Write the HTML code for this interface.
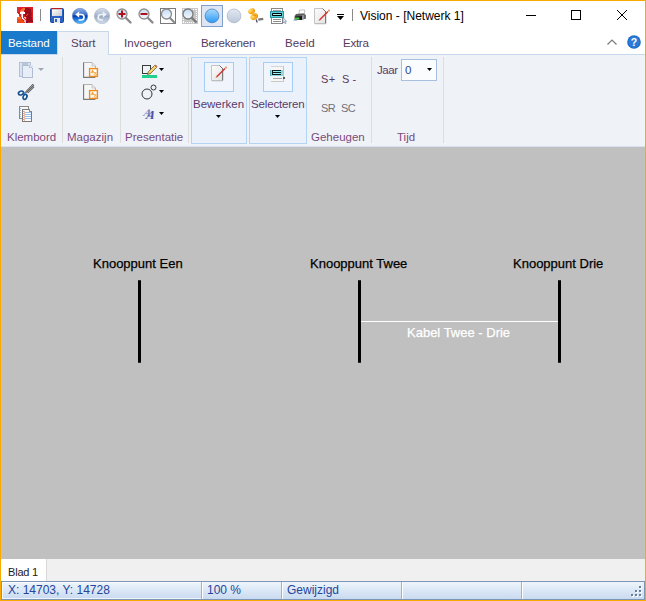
<!DOCTYPE html>
<html><head><meta charset="utf-8">
<style>
*{margin:0;padding:0;box-sizing:border-box}
html,body{width:646px;height:601px;overflow:hidden;background:#fff;font-family:"Liberation Sans",sans-serif;font-size:12px;color:#000;position:relative}
.a{position:absolute}
.t{position:absolute;white-space:nowrap;line-height:1}
.lbl{color:#7a4a7c;font-size:11.5px}
svg{position:absolute;overflow:visible}
</style></head><body>
<!-- title bar -->
<div class="a" style="left:0;top:0;width:646px;height:31px;background:#fff"></div>
<!-- app icon -->
<svg style="left:17px;top:7px" width="16" height="16" viewBox="0 0 16 16" shape-rendering="crispEdges">
<rect x="0" y="0" width="8" height="1" fill="#e0283c"/>
<rect x="8" y="0" width="8" height="1" fill="#dc1e1e"/>
<rect x="0" y="1" width="3" height="1" fill="#e0283c"/>
<rect x="3" y="1" width="2" height="1" fill="#dc1e1e"/>
<rect x="5" y="1" width="1" height="1" fill="#f04a1a"/>
<rect x="6" y="1" width="2" height="1" fill="#f87030"/>
<rect x="8" y="1" width="4" height="1" fill="#980c1c"/>
<rect x="12" y="1" width="1" height="1" fill="#b81420"/>
<rect x="13" y="1" width="3" height="1" fill="#dc1e1e"/>
<rect x="0" y="2" width="3" height="1" fill="#e0283c"/>
<rect x="3" y="2" width="1" height="1" fill="#dc1e1e"/>
<rect x="4" y="2" width="4" height="1" fill="#f87030"/>
<rect x="8" y="2" width="6" height="1" fill="#980c1c"/>
<rect x="14" y="2" width="2" height="1" fill="#dc1e1e"/>
<rect x="0" y="3" width="3" height="1" fill="#e0283c"/>
<rect x="3" y="3" width="1" height="1" fill="#f04a1a"/>
<rect x="4" y="3" width="3" height="1" fill="#f87030"/>
<rect x="7" y="3" width="1" height="1" fill="#b81420"/>
<rect x="8" y="3" width="6" height="1" fill="#980c1c"/>
<rect x="14" y="3" width="2" height="1" fill="#dc1e1e"/>
<rect x="0" y="4" width="2" height="1" fill="#e0283c"/>
<rect x="2" y="4" width="1" height="1" fill="#dc1e1e"/>
<rect x="3" y="4" width="1" height="1" fill="#f87030"/>
<rect x="4" y="4" width="3" height="1" fill="#ffb8a8"/>
<rect x="7" y="4" width="1" height="1" fill="#b81420"/>
<rect x="8" y="4" width="6" height="1" fill="#980c1c"/>
<rect x="14" y="4" width="2" height="1" fill="#dc1e1e"/>
<rect x="0" y="5" width="1" height="1" fill="#e0283c"/>
<rect x="1" y="5" width="2" height="1" fill="#dc1e1e"/>
<rect x="3" y="5" width="5" height="1" fill="#ffffff"/>
<rect x="8" y="5" width="6" height="1" fill="#980c1c"/>
<rect x="14" y="5" width="1" height="1" fill="#b81420"/>
<rect x="15" y="5" width="1" height="1" fill="#dc1e1e"/>
<rect x="0" y="6" width="1" height="1" fill="#ffffff"/>
<rect x="1" y="6" width="2" height="1" fill="#dc1e1e"/>
<rect x="3" y="6" width="5" height="1" fill="#ffffff"/>
<rect x="8" y="6" width="1" height="1" fill="#b81420"/>
<rect x="9" y="6" width="5" height="1" fill="#980c1c"/>
<rect x="14" y="6" width="1" height="1" fill="#b81420"/>
<rect x="15" y="6" width="1" height="1" fill="#dc1e1e"/>
<rect x="0" y="7" width="2" height="1" fill="#ffffff"/>
<rect x="2" y="7" width="1" height="1" fill="#dc1e1e"/>
<rect x="3" y="7" width="1" height="1" fill="#c02050"/>
<rect x="4" y="7" width="1" height="1" fill="#ffb8a8"/>
<rect x="5" y="7" width="1" height="1" fill="#ffffff"/>
<rect x="6" y="7" width="1" height="1" fill="#dc1e1e"/>
<rect x="7" y="7" width="1" height="1" fill="#b81420"/>
<rect x="8" y="7" width="2" height="1" fill="#980c1c"/>
<rect x="10" y="7" width="1" height="1" fill="#f04a1a"/>
<rect x="11" y="7" width="1" height="1" fill="#b81420"/>
<rect x="12" y="7" width="2" height="1" fill="#980c1c"/>
<rect x="14" y="7" width="1" height="1" fill="#b81420"/>
<rect x="15" y="7" width="1" height="1" fill="#dc1e1e"/>
<rect x="0" y="8" width="2" height="1" fill="#ffffff"/>
<rect x="2" y="8" width="2" height="1" fill="#dc1e1e"/>
<rect x="4" y="8" width="1" height="1" fill="#ffb8a8"/>
<rect x="5" y="8" width="1" height="1" fill="#ffffff"/>
<rect x="6" y="8" width="1" height="1" fill="#dc1e1e"/>
<rect x="7" y="8" width="1" height="1" fill="#b81420"/>
<rect x="8" y="8" width="1" height="1" fill="#980c1c"/>
<rect x="9" y="8" width="1" height="1" fill="#f04a1a"/>
<rect x="10" y="8" width="4" height="1" fill="#980c1c"/>
<rect x="14" y="8" width="1" height="1" fill="#b81420"/>
<rect x="15" y="8" width="1" height="1" fill="#dc1e1e"/>
<rect x="0" y="9" width="2" height="1" fill="#ffffff"/>
<rect x="2" y="9" width="1" height="1" fill="#f87030"/>
<rect x="3" y="9" width="1" height="1" fill="#dc1e1e"/>
<rect x="4" y="9" width="1" height="1" fill="#ffb8a8"/>
<rect x="5" y="9" width="1" height="1" fill="#ffffff"/>
<rect x="6" y="9" width="2" height="1" fill="#dc1e1e"/>
<rect x="8" y="9" width="1" height="1" fill="#b81420"/>
<rect x="9" y="9" width="5" height="1" fill="#980c1c"/>
<rect x="14" y="9" width="2" height="1" fill="#dc1e1e"/>
<rect x="0" y="10" width="4" height="1" fill="#f87030"/>
<rect x="4" y="10" width="1" height="1" fill="#f04a1a"/>
<rect x="5" y="10" width="1" height="1" fill="#ffffff"/>
<rect x="6" y="10" width="1" height="1" fill="#dc1e1e"/>
<rect x="7" y="10" width="2" height="1" fill="#ffb8a8"/>
<rect x="9" y="10" width="1" height="1" fill="#b81420"/>
<rect x="10" y="10" width="5" height="1" fill="#980c1c"/>
<rect x="15" y="10" width="1" height="1" fill="#dc1e1e"/>
<rect x="0" y="11" width="4" height="1" fill="#f87030"/>
<rect x="4" y="11" width="1" height="1" fill="#f04a1a"/>
<rect x="5" y="11" width="1" height="1" fill="#ffffff"/>
<rect x="6" y="11" width="1" height="1" fill="#ffb8a8"/>
<rect x="7" y="11" width="1" height="1" fill="#dc1e1e"/>
<rect x="8" y="11" width="1" height="1" fill="#ffb8a8"/>
<rect x="9" y="11" width="1" height="1" fill="#b81420"/>
<rect x="10" y="11" width="5" height="1" fill="#980c1c"/>
<rect x="15" y="11" width="1" height="1" fill="#dc1e1e"/>
<rect x="0" y="12" width="5" height="1" fill="#f04a1a"/>
<rect x="5" y="12" width="1" height="1" fill="#dc1e1e"/>
<rect x="6" y="12" width="1" height="1" fill="#ffffff"/>
<rect x="7" y="12" width="1" height="1" fill="#ffb8a8"/>
<rect x="8" y="12" width="1" height="1" fill="#dc1e1e"/>
<rect x="9" y="12" width="1" height="1" fill="#b81420"/>
<rect x="10" y="12" width="5" height="1" fill="#980c1c"/>
<rect x="15" y="12" width="1" height="1" fill="#dc1e1e"/>
<rect x="0" y="13" width="6" height="1" fill="#f04a1a"/>
<rect x="6" y="13" width="1" height="1" fill="#dc1e1e"/>
<rect x="7" y="13" width="2" height="1" fill="#ffb8a8"/>
<rect x="9" y="13" width="1" height="1" fill="#b81420"/>
<rect x="10" y="13" width="6" height="1" fill="#980c1c"/>
<rect x="0" y="14" width="7" height="1" fill="#f04a1a"/>
<rect x="7" y="14" width="2" height="1" fill="#ffb8a8"/>
<rect x="9" y="14" width="1" height="1" fill="#7a0a40"/>
<rect x="10" y="14" width="6" height="1" fill="#980c1c"/>
<rect x="0" y="15" width="8" height="1" fill="#f04a1a"/>
<rect x="8" y="15" width="1" height="1" fill="#ffb8a8"/>
<rect x="9" y="15" width="2" height="1" fill="#7a0a40"/>
<rect x="11" y="15" width="5" height="1" fill="#dc1e1e"/>
</svg>
<div class="a" style="left:40px;top:9px;width:1px;height:12px;background:#8a8a8a"></div>
<!-- save -->
<svg style="left:50px;top:8px" width="14" height="15" viewBox="0 0 14 15">
 <rect x="0.5" y="0.5" width="13" height="14" rx="1" fill="#2a63c4" stroke="#1b48a0"/>
 <rect x="2" y="0" width="10" height="1.5" fill="#b82020"/>
 <rect x="2" y="1.5" width="10" height="6.5" fill="#f2f2f2"/>
 <rect x="2" y="1.5" width="10" height="6.5" fill="url(#gsv)"/>
 <rect x="4" y="10" width="6" height="5" fill="#e8e8e8"/>
 <rect x="5" y="11" width="2" height="3" fill="#2a63c4"/>
 <defs><linearGradient id="gsv" x1="0" y1="0" x2="1" y2="1"><stop offset="0" stop-color="#fff"/><stop offset="1" stop-color="#c8c8c8"/></linearGradient></defs>
</svg>
<!-- undo -->
<svg style="left:72px;top:8px" width="16" height="16" viewBox="0 0 16 16">
 <defs><linearGradient id="gu" x1="0" y1="0" x2="0" y2="1"><stop offset="0" stop-color="#8fb0e6"/><stop offset="0.4" stop-color="#3f74d0"/><stop offset="0.5" stop-color="#0a3c9e"/><stop offset="0.6" stop-color="#0d5ad0"/><stop offset="1" stop-color="#5ac8ff"/></linearGradient>
 <linearGradient id="gr" x1="0" y1="0" x2="0" y2="1"><stop offset="0" stop-color="#d4dcea"/><stop offset="0.45" stop-color="#aab8d0"/><stop offset="0.5" stop-color="#94a4be"/><stop offset="0.6" stop-color="#a8b6cc"/><stop offset="1" stop-color="#d0dcec"/></linearGradient></defs>
 <circle cx="8" cy="8" r="7.7" fill="url(#gu)" stroke="#5a78b0" stroke-width="0.5"/>
 <path d="M6 6.5 H9.5 Q12 6.5 12 9.3 Q12 12 9.3 12 H6.5" fill="none" stroke="#fff" stroke-width="1.7"/>
 <path d="M3.3 6.5 L7.2 3.2 L7.2 9.8 Z" fill="#fff"/>
</svg>
<!-- redo -->
<svg style="left:94px;top:8px" width="16" height="16" viewBox="0 0 16 16">
 <circle cx="8" cy="8" r="7.7" fill="url(#gr)" stroke="#a0aec4" stroke-width="0.5"/>
 <path d="M10 6.5 H7 Q4.2 6.5 4.2 9.3 Q4.2 12 7 12 H9" fill="none" stroke="#eef2f8" stroke-width="1.7"/>
 <path d="M12.7 6.5 L8.8 3.2 L8.8 9.8 Z" fill="#eef2f8"/>
</svg>
<!-- zoom in -->
<svg style="left:116px;top:8px" width="16" height="16" viewBox="0 0 16 16">
 <line x1="9" y1="9" x2="14.5" y2="14.5" stroke="#8a8a8a" stroke-width="2.4" stroke-linecap="round"/>
 <circle cx="6" cy="6" r="5" fill="url(#glens)" stroke="#8f8f8f" stroke-width="1.3"/>
 <rect x="2.5" y="5" width="7" height="2" fill="#b0101a"/>
 <rect x="5" y="2.5" width="2" height="7" fill="#b0101a"/>
</svg>
<!-- zoom out -->
<svg style="left:138px;top:8px" width="16" height="16" viewBox="0 0 16 16">
 <line x1="9" y1="9" x2="14.5" y2="14.5" stroke="#8a8a8a" stroke-width="2.4" stroke-linecap="round"/>
 <circle cx="6" cy="6" r="5" fill="url(#glens)" stroke="#8f8f8f" stroke-width="1.3"/>
 <rect x="2.5" y="5" width="7" height="2" fill="#b0101a"/>
</svg>
<!-- zoom fit -->
<svg style="left:160px;top:8px" width="16" height="16" viewBox="0 0 16 16">
 <rect x="0.5" y="0.5" width="15" height="15" fill="#fff" stroke="#7a7a7a"/>
 <line x1="8.5" y1="8.5" x2="14" y2="14" stroke="#8a8a8a" stroke-width="2.2" stroke-linecap="round"/>
 <circle cx="6.5" cy="6" r="5" fill="url(#glens)" stroke="#8a8a8a" stroke-width="1.3"/>
</svg>
<!-- zoom window -->
<svg style="left:182px;top:8px" width="16" height="16" viewBox="0 0 16 16">
 <defs><linearGradient id="glens" x1="0" y1="0" x2="0" y2="1"><stop offset="0" stop-color="#c4dcf4"/><stop offset="1" stop-color="#f4f8fc"/></linearGradient></defs>
 <rect x="0" y="0" width="16" height="16" fill="#c6c6c6"/>
 <g shape-rendering="crispEdges"><rect x="1" y="14" width="1" height="1" fill="#fff"/><rect x="14" y="1" width="1" height="1" fill="#fff"/><rect x="1" y="1" width="1" height="1" fill="#fff"/><rect x="1" y="1" width="1" height="1" fill="#fff"/><rect x="3" y="14" width="1" height="1" fill="#fff"/><rect x="14" y="3" width="1" height="1" fill="#fff"/><rect x="1" y="3" width="1" height="1" fill="#fff"/><rect x="3" y="1" width="1" height="1" fill="#fff"/><rect x="5" y="14" width="1" height="1" fill="#fff"/><rect x="14" y="5" width="1" height="1" fill="#fff"/><rect x="1" y="5" width="1" height="1" fill="#fff"/><rect x="5" y="1" width="1" height="1" fill="#fff"/><rect x="7" y="14" width="1" height="1" fill="#fff"/><rect x="14" y="7" width="1" height="1" fill="#fff"/><rect x="1" y="7" width="1" height="1" fill="#fff"/><rect x="7" y="1" width="1" height="1" fill="#fff"/><rect x="9" y="14" width="1" height="1" fill="#fff"/><rect x="14" y="9" width="1" height="1" fill="#fff"/><rect x="1" y="9" width="1" height="1" fill="#fff"/><rect x="9" y="1" width="1" height="1" fill="#fff"/><rect x="11" y="14" width="1" height="1" fill="#fff"/><rect x="14" y="11" width="1" height="1" fill="#fff"/><rect x="1" y="11" width="1" height="1" fill="#fff"/><rect x="11" y="1" width="1" height="1" fill="#fff"/><rect x="13" y="14" width="1" height="1" fill="#fff"/><rect x="14" y="13" width="1" height="1" fill="#fff"/><rect x="1" y="13" width="1" height="1" fill="#fff"/><rect x="13" y="1" width="1" height="1" fill="#fff"/></g>
 <line x1="9" y1="9" x2="14.5" y2="14.5" stroke="#7c7c7c" stroke-width="2.4"/>
 <circle cx="6" cy="6" r="5" fill="url(#glens)" stroke="#7a7a7a" stroke-width="1.3"/>
</svg>
<!-- selected button -->
<div class="a" style="left:201px;top:5px;width:22px;height:22px;background:#dde6f2;border:1px solid #7f9fca"></div>
<svg style="left:204px;top:8px" width="16" height="16" viewBox="0 0 16 16">
 <defs><linearGradient id="gb" x1="0" y1="0" x2="0" y2="1"><stop offset="0" stop-color="#a4d6fb"/><stop offset="0.45" stop-color="#72bdf9"/><stop offset="1" stop-color="#2898f4"/></linearGradient>
 <linearGradient id="gg" x1="0" y1="0" x2="0" y2="1"><stop offset="0" stop-color="#e2e8f2"/><stop offset="1" stop-color="#bcc7d8"/></linearGradient></defs>
 <circle cx="8" cy="7.9" r="6.9" fill="url(#gb)" stroke="#3f78b8" stroke-width="0.7"/>
</svg>
<svg style="left:226px;top:8px" width="16" height="16" viewBox="0 0 16 16">
 <circle cx="8" cy="7.9" r="6.9" fill="url(#gg)" stroke="#a4b0c4" stroke-width="0.7"/>
</svg>
<!-- pushpin -->
<svg style="left:247px;top:8px" width="18" height="16" viewBox="0 0 18 16">
 <defs><radialGradient id="gpin" cx="0.35" cy="0.3" r="0.8"><stop offset="0" stop-color="#ffe27a"/><stop offset="0.5" stop-color="#f9b628"/><stop offset="1" stop-color="#ec8c10"/></radialGradient></defs>
 <path d="M11 10.5 L16 9.8 L16.5 12 L11.5 12.8 Z" fill="#7a7a7a"/>
 <path d="M9.2 11.5 L10.2 14.5" stroke="#4a4a68" stroke-width="1.3"/>
 <ellipse cx="4.6" cy="3.2" rx="3.6" ry="2.6" transform="rotate(-25 4.6 3.2)" fill="url(#gpin)"/>
 <path d="M4 4.5 L8 6.5 L6 8 Z" fill="#f0a020"/>
 <ellipse cx="7.2" cy="8.6" rx="4" ry="3.2" transform="rotate(-30 7.2 8.6)" fill="url(#gpin)"/>
 <path d="M5.5 7 Q7.5 6.5 9 8" stroke="#e07800" stroke-width="0.9" fill="none"/>
</svg>
<!-- doc with highlight -->
<svg style="left:270px;top:8px" width="17" height="16" viewBox="0 0 17 16">
 <rect x="1.5" y="0.5" width="11" height="15" fill="#fff" stroke="#888"/>
 <rect x="3" y="2" width="8" height="1" fill="#a0a0a0"/>
 <rect x="3" y="11" width="8" height="1" fill="#909090"/>
 <rect x="3" y="13" width="8" height="1" fill="#909090"/>
 <rect x="0.5" y="3.5" width="13" height="6" fill="#5ccfd9" stroke="#2a9aa8"/>
 <rect x="2" y="5" width="10" height="3" rx="0.8" fill="#000"/>
 <rect x="3" y="6" width="8" height="1" fill="#9cf4f8"/>
 <path d="M13 9.5 V15 L14.2 13.8 L15.3 15.8 L16.1 15.4 L15.1 13.4 L16.6 13.4 Z" fill="#e8eef8" stroke="#6a7e9a" stroke-width="0.6"/>
</svg>
<!-- printer -->
<svg style="left:292px;top:9px" width="14" height="13" viewBox="0 0 14 13">
 <path d="M7.5 1 L12.8 1 L12.3 5 L6.8 5 Z" fill="#fff" stroke="#9a9a9a" stroke-width="0.6"/>
 <path d="M3.5 5 L12 4.6 L13.5 6 L4 6.8 Z" fill="#5a5a5a"/>
 <path d="M2.8 6.5 L10.5 6 L10.3 11 L2.5 10.8 Z" fill="#151515"/>
 <path d="M3 6.5 L10.5 6 L10.5 7 L3 7.5 Z" fill="#6a6a70"/>
 <path d="M10.3 6 L13.6 5.8 L13.6 9.8 L10.3 11 Z" fill="#8d939c"/>
 <path d="M12.5 6 L13.6 6 L13.6 9.5 L12.5 9.9 Z" fill="#3a3a3a"/>
 <path d="M3 8.6 L7.5 8.4 L7.3 10.5 L2.8 10.5 Z" fill="#3ecc3e"/>
 <path d="M1.5 10.8 L5.5 10.8 L4.5 12 L1.2 11.8 Z" fill="#a8c4ec"/>
</svg>
<!-- doc with pencil -->
<svg style="left:314px;top:8px" width="17" height="17" viewBox="0 0 17 17">
 <defs><linearGradient id="gdoc314" x1="0" y1="0" x2="1" y2="1"><stop offset="0" stop-color="#fdfdfd"/><stop offset="1" stop-color="#e2e2e2"/></linearGradient></defs>
 <path d="M0.5 0.5 H8.5 L12 4 V15.5 H0.5 Z" fill="url(#gdoc314)" stroke="#c4c4c4"/>
 <path d="M8.5 0.5 L12 4" stroke="#707070" stroke-width="1"/>
 <path d="M11.5 4 V15.5" stroke="#7a7a7a" stroke-width="1"/>
 <path d="M1 15.8 H12" stroke="#b8b8b8" stroke-width="0.8"/>
 <path d="M5.5 12 L14 3.5" stroke="#d83030" stroke-width="1.5"/>
 <path d="M5.5 12 L4.8 12.7" stroke="#c89060" stroke-width="1.2"/>
 <circle cx="15" cy="2.6" r="1.1" fill="#e39a68"/>
</svg>
<!-- customize -->
<div class="a" style="left:337px;top:14px;width:7px;height:1px;background:#000"></div>
<svg style="left:337px;top:16px" width="7" height="4" viewBox="0 0 7 4"><path d="M0 0 L7 0 L3.5 4 Z" fill="#000"/></svg>
<div class="a" style="left:352px;top:9px;width:1px;height:12px;background:#8a8a8a"></div>
<div class="t" style="left:360px;top:10px;font-size:12px;color:#000">Vision - [Netwerk 1]</div>
<!-- window controls -->
<div class="a" style="left:526px;top:15px;width:10px;height:1px;background:#000"></div>
<div class="a" style="left:571px;top:10px;width:10px;height:10px;border:1px solid #000"></div>
<svg style="left:617px;top:10px" width="10" height="10" viewBox="0 0 10 10"><path d="M0 0 L10 10 M10 0 L0 10" stroke="#000" stroke-width="1"/></svg>

<!-- tabs -->
<div class="a" style="left:1px;top:31px;width:56px;height:23px;background:#1979ca"></div>
<div class="t" style="left:8px;top:37px;color:#fff;font-size:11.6px;letter-spacing:-0.15px">Bestand</div>
<div class="a" style="left:57px;top:31px;width:52px;height:24px;background:#eff3f8;border:1px solid #c8d8ec;border-bottom:none;z-index:2"></div>
<div class="t" style="left:71px;top:37px;color:#553a5e;font-size:11.6px;z-index:3">Start</div>
<div class="t" style="left:124px;top:37px;color:#553a5e;font-size:11.6px">Invoegen</div>
<div class="t" style="left:201px;top:37px;color:#553a5e;font-size:11.6px;letter-spacing:-0.2px">Berekenen</div>
<div class="t" style="left:285px;top:37px;color:#553a5e;font-size:11.6px">Beeld</div>
<div class="t" style="left:343px;top:37px;color:#553a5e;font-size:11.6px;letter-spacing:-0.3px">Extra</div>
<svg style="left:607px;top:39px" width="10" height="6" viewBox="0 0 10 6"><path d="M0.5 5.5 L5 1 L9.5 5.5" fill="none" stroke="#7a7a7a" stroke-width="1.2"/></svg>
<svg style="left:627px;top:35px" width="14" height="14" viewBox="0 0 14 14">
 <circle cx="7" cy="7" r="6.8" fill="#1a6ac8"/>
 <circle cx="7" cy="7" r="5.8" fill="#2a7ad6"/>
 <text x="7" y="11" font-family="Liberation Sans" font-weight="bold" font-size="10.5" fill="#fff" text-anchor="middle">?</text>
</svg>

<!-- ribbon -->
<div class="a" style="left:1px;top:54px;width:644px;height:93px;background:#eff3f8;border-top:1px solid #c8d8ec;border-bottom:1px solid #d8e2ee"></div>
<!-- separators -->
<div class="a" style="left:62px;top:57px;width:1px;height:86px;background:#dedddd"></div>
<div class="a" style="left:120px;top:57px;width:1px;height:86px;background:#dedddd"></div>
<div class="a" style="left:188px;top:57px;width:1px;height:86px;background:#dedddd"></div>
<div class="a" style="left:371px;top:57px;width:1px;height:86px;background:#dedddd"></div>
<div class="a" style="left:443px;top:57px;width:1px;height:86px;background:#dedddd"></div>
<!-- Klembord -->
<svg style="left:19px;top:62px" width="14" height="16" viewBox="0 0 14 16" shape-rendering="crispEdges">
 <rect x="0" y="0" width="12" height="15" fill="#b4c2d6"/>
 <rect x="1" y="1" width="10" height="13" fill="#dae3ef"/>
 <rect x="3" y="1" width="6" height="2" fill="#b8c6da"/>
 <rect x="3" y="3" width="11" height="13" fill="#aebdd2"/>
 <rect x="4" y="4" width="9" height="11" fill="#e8eef7"/>
 <rect x="10" y="3" width="4" height="3" fill="#dde5f0"/>
 <rect x="10" y="3" width="1" height="3" fill="#b8c6da"/>
 <rect x="10" y="5" width="3" height="1" fill="#b8c6da"/>
</svg>
<svg style="left:38px;top:68px" width="6" height="4" viewBox="0 0 6 4"><path d="M0 0 L6 0 L3 3 Z" fill="#a0a8b4"/></svg>
<svg style="left:18px;top:83px" width="17" height="18" viewBox="0 0 17 18">
 <path d="M8 9.5 L15.5 1.5" stroke="#5a5a5a" stroke-width="2.2"/>
 <path d="M8 9.5 L15.5 1.5" stroke="#b8b8b8" stroke-width="0.9"/>
 <path d="M9.5 9.5 L15.8 3.5" stroke="#5a5a5a" stroke-width="1.8"/>
 <path d="M9.5 9.5 L15.8 3.5" stroke="#c0c0c0" stroke-width="0.7"/>
 <ellipse cx="3" cy="10" rx="2.6" ry="1.8" transform="rotate(-20 3 10)" fill="#fff" stroke="#17508c" stroke-width="1.7"/>
 <ellipse cx="7" cy="13.8" rx="1.8" ry="2.6" transform="rotate(25 7 13.8)" fill="#fff" stroke="#17508c" stroke-width="1.7"/>
 <path d="M5 9.8 L7.8 9 L7.5 11.5" fill="#2a78c0"/>
</svg>
<svg style="left:19px;top:106px" width="14" height="16" viewBox="0 0 14 16" shape-rendering="crispEdges">
 <rect x="0" y="0" width="10" height="13" fill="#8a8a8a"/>
 <rect x="1" y="1" width="8" height="11" fill="#f8f8f8"/>
 <rect x="1" y="2" width="1" height="1" fill="#a0b8d8"/><rect x="1" y="4" width="1" height="1" fill="#a0b8d8"/><rect x="1" y="6" width="1" height="1" fill="#a0b8d8"/><rect x="1" y="8" width="1" height="1" fill="#a0b8d8"/><rect x="1" y="10" width="1" height="1" fill="#a0b8d8"/>
 <rect x="3" y="3" width="10" height="13" fill="#7a7a7a"/>
 <rect x="4" y="4" width="8" height="11" fill="#fbfbfb"/>
 <rect x="10" y="3" width="3" height="3" fill="#eff3f8"/>
 <rect x="10" y="3" width="1" height="3" fill="#8a8a8a"/><rect x="10" y="5" width="3" height="1" fill="#8a8a8a"/>
 <rect x="6" y="6" width="6" height="1" fill="#98c0ea"/>
 <rect x="6" y="8" width="6" height="1" fill="#98c0ea"/>
 <rect x="6" y="10" width="6" height="1" fill="#98c0ea"/>
 <rect x="6" y="12" width="6" height="1" fill="#98c0ea"/>
 <rect x="5" y="5" width="1" height="10" fill="#f0b8a0"/>
 <rect x="4" y="5" width="1" height="1" fill="#a0b8d8"/><rect x="4" y="7" width="1" height="1" fill="#a0b8d8"/><rect x="4" y="9" width="1" height="1" fill="#a0b8d8"/><rect x="4" y="11" width="1" height="1" fill="#a0b8d8"/><rect x="4" y="13" width="1" height="1" fill="#a0b8d8"/>
</svg>
<div class="t lbl" style="left:7px;top:132px">Klembord</div>
<!-- Magazijn -->
<svg style="left:83px;top:62px" width="15" height="16" viewBox="0 0 15 16">
 <path d="M0.5 0.5 H9 L12.5 4 V15.5 H0.5 Z" fill="#f6f6f6" stroke="#b4b4b4"/>
 <path d="M9 0.5 V4 H12.5" fill="#e8e8e8" stroke="#c0c0c0" stroke-width="0.8"/>
 <path d="M0.6 0.5 V15.4 H12" fill="none" stroke="#7a7a7a" stroke-width="1.1"/>
 <rect x="6.6" y="6.6" width="7.8" height="7.8" fill="#fff" stroke="#f08a1c" stroke-width="1.4"/>
 <path d="M8.2 10 L9.6 7.6 L11 10 Z" fill="#f0a030"/>
 <rect x="7.5" y="10" width="6" height="1.2" fill="#f5b860"/>
 <circle cx="12.3" cy="12.4" r="1" fill="none" stroke="#f0a030" stroke-width="0.8"/>
</svg>
<svg style="left:83px;top:84px" width="15" height="16" viewBox="0 0 15 16">
 <path d="M0.5 0.5 H9 L12.5 4 V15.5 H0.5 Z" fill="#f6f6f6" stroke="#b4b4b4"/>
 <path d="M9 0.5 V4 H12.5" fill="#e8e8e8" stroke="#c0c0c0" stroke-width="0.8"/>
 <path d="M0.6 0.5 V15.4 H12" fill="none" stroke="#7a7a7a" stroke-width="1.1"/>
 <rect x="6.6" y="6.6" width="7.8" height="7.8" fill="#fff" stroke="#f08a1c" stroke-width="1.4"/>
 <path d="M8.2 10 L9.6 7.6 L11 10 Z" fill="#f0a030"/>
 <rect x="7.5" y="10" width="6" height="1.2" fill="#f5b860"/>
 <circle cx="12.3" cy="12.4" r="1" fill="none" stroke="#f0a030" stroke-width="0.8"/>
</svg>
<div class="t lbl" style="left:67px;top:132px">Magazijn</div>
<!-- Presentatie -->
<svg style="left:142px;top:64px" width="16" height="14" viewBox="0 0 16 14">
 <rect x="0.5" y="1.5" width="8" height="8" fill="none" stroke="#3a3a3a"/>
 <path d="M6.3 7.7 L12.5 1.5 L14.5 3.5 L8.3 9.7 L5.5 10.5 Z" fill="#f2d26a" stroke="#5a4a2a" stroke-width="0.7" stroke-linejoin="round"/>
 <path d="M12.5 1.5 L13.6 0.4 L15.6 2.4 L14.5 3.5 Z" fill="#d8705a"/>
 <rect x="0" y="11" width="15" height="3" fill="#22d08e"/>
</svg>
<svg style="left:159px;top:68px" width="5" height="3" viewBox="0 0 5 3"><path d="M0 0 L5 0 L2.5 3 Z" fill="#000"/></svg>
<svg style="left:141px;top:84px" width="16" height="16" viewBox="0 0 16 16">
 <circle cx="6" cy="10" r="5" fill="none" stroke="#333" stroke-width="1"/>
 <circle cx="12.5" cy="3.5" r="2.5" fill="none" stroke="#333" stroke-width="1"/>
</svg>
<svg style="left:159px;top:90px" width="5" height="3" viewBox="0 0 5 3"><path d="M0 0 L5 0 L2.5 3 Z" fill="#000"/></svg>
<svg style="left:142px;top:107px" width="15" height="13" viewBox="0 0 15 13">
 <g transform="skewX(-25) translate(4,0)">
 <text x="0.5" y="8.5" font-family="Liberation Serif" font-weight="bold" font-size="10" fill="#7a80bc">A</text>
 <text x="4.5" y="12.5" font-family="Liberation Serif" font-weight="bold" font-size="12" fill="#4e56a2">A</text>
 </g>
</svg>
<svg style="left:159px;top:112px" width="5" height="3" viewBox="0 0 5 3"><path d="M0 0 L5 0 L2.5 3 Z" fill="#000"/></svg>
<div class="t lbl" style="left:125px;top:132px">Presentatie</div>
<!-- Bewerken -->
<div class="a" style="left:191px;top:57px;width:56px;height:87px;background:#eaf1fa;border:1px solid #b4d4f4"></div>
<div class="a" style="left:204px;top:62px;width:30px;height:30px;background:#f0f5fc;border:1px solid #a8cdf2"></div>
<svg style="left:211px;top:65px" width="17" height="17" viewBox="0 0 17 17">
 <defs><linearGradient id="gdoc211" x1="0" y1="0" x2="1" y2="1"><stop offset="0" stop-color="#fdfdfd"/><stop offset="1" stop-color="#e2e2e2"/></linearGradient></defs>
 <path d="M0.5 0.5 H8.5 L12 4 V15.5 H0.5 Z" fill="url(#gdoc211)" stroke="#c4c4c4"/>
 <path d="M8.5 0.5 L12 4" stroke="#707070" stroke-width="1"/>
 <path d="M11.5 4 V15.5" stroke="#7a7a7a" stroke-width="1"/>
 <path d="M1 15.8 H12" stroke="#b8b8b8" stroke-width="0.8"/>
 <path d="M5.5 12 L14 3.5" stroke="#d83030" stroke-width="1.5"/>
 <path d="M5.5 12 L4.8 12.7" stroke="#c89060" stroke-width="1.2"/>
 <circle cx="15" cy="2.6" r="1.1" fill="#e39a68"/>
</svg>

<div class="t lbl" style="left:193px;top:99px;color:#5a3a6a">Bewerken</div>
<svg style="left:216px;top:115px" width="5" height="3" viewBox="0 0 5 3"><path d="M0 0 L5 0 L2.5 3 Z" fill="#000"/></svg>
<!-- Selecteren -->
<div class="a" style="left:249px;top:57px;width:58px;height:87px;background:#eaf1fa;border:1px solid #b4d4f4"></div>
<div class="a" style="left:263px;top:62px;width:30px;height:30px;background:#f0f5fc;border:1px solid #a8cdf2"></div>
<svg style="left:270px;top:66px" width="16" height="16" viewBox="0 0 16 16" shape-rendering="crispEdges">
 <rect x="1" y="0" width="13" height="16" fill="#f6f6f6"/>
 <rect x="1" y="0" width="13" height="1" fill="#d4d4d4"/>
 <rect x="13" y="0" width="1" height="16" fill="#c4c4c4"/>
 <rect x="1" y="15" width="13" height="1" fill="#c8c8c8"/>
 <rect x="3" y="12" width="9" height="1" fill="#a8a8a8"/>
 <rect x="0" y="4" width="14" height="6" fill="#94d6de"/>
 <rect x="0" y="4" width="1" height="6" fill="#5ab0bc"/>
 <rect x="2" y="4" width="9" height="5" fill="#0c1a1a"/>
 <rect x="3" y="5" width="8" height="1" fill="#8ef0f4"/>
 <rect x="3" y="7" width="8" height="1" fill="#8ef0f4"/>
 <rect x="13" y="11" width="2" height="2" fill="#5a5a5a"/>
</svg>
<div class="t lbl" style="left:251px;top:99px;color:#5a3a6a;letter-spacing:-0.15px">Selecteren</div>
<svg style="left:275px;top:115px" width="5" height="3" viewBox="0 0 5 3"><path d="M0 0 L5 0 L2.5 3 Z" fill="#000"/></svg>
<!-- Geheugen -->
<div class="t" style="left:321px;top:74px;color:#5a3a5a;font-size:11px;letter-spacing:0.3px">S+</div>
<div class="t" style="left:342px;top:74px;color:#5a3a5a;font-size:11px;word-spacing:0px">S -</div>
<div class="t" style="left:321px;top:103px;color:#707078;font-size:11px;letter-spacing:-0.6px">SR</div>
<div class="t" style="left:341px;top:103px;color:#707078;font-size:11px;letter-spacing:-0.6px">SC</div>
<div class="t lbl" style="left:311px;top:132px">Geheugen</div>
<!-- Tijd -->
<div class="t" style="left:377px;top:65px;color:#5a3a6a;font-size:11.5px;letter-spacing:-0.4px">Jaar</div>
<div class="a" style="left:401px;top:59px;width:36px;height:22px;background:#fbfcfe;border:1px solid #a8c0e0"></div>
<div class="t" style="left:405px;top:65px;color:#2a4a8a;font-size:11.5px">0</div>
<svg style="left:427px;top:68px" width="5" height="3" viewBox="0 0 5 3"><path d="M0 0 L5 0 L2.5 3 Z" fill="#000"/></svg>
<div class="t lbl" style="left:397px;top:132px">Tijd</div>

<!-- canvas -->
<div class="a" style="left:1px;top:147px;width:644px;height:412px;background:#c0c0c0"></div>
<div class="t" style="left:93px;top:257px;font-size:13px;color:#000;-webkit-text-stroke:0.25px #000">Knooppunt Een</div>
<div class="t" style="left:310px;top:257px;font-size:13px;color:#000;-webkit-text-stroke:0.25px #000">Knooppunt Twee</div>
<div class="t" style="left:513px;top:257px;font-size:13px;color:#000;-webkit-text-stroke:0.25px #000">Knooppunt Drie</div>
<div class="a" style="left:138px;top:280px;width:3px;height:83px;background:linear-gradient(#2a2a2a 0 1px,#000 1px calc(100% - 1px),#2a2a2a calc(100% - 1px))"></div>
<div class="a" style="left:358px;top:280px;width:3px;height:83px;background:linear-gradient(#2a2a2a 0 1px,#000 1px calc(100% - 1px),#2a2a2a calc(100% - 1px))"></div>
<div class="a" style="left:558px;top:280px;width:3px;height:83px;background:linear-gradient(#2a2a2a 0 1px,#000 1px calc(100% - 1px),#2a2a2a calc(100% - 1px))"></div>
<div class="a" style="left:361px;top:321px;width:197px;height:1px;background:#fff"></div>
<div class="t" style="left:407px;top:326px;color:#fff;font-size:13px;-webkit-text-stroke:0.25px #fff">Kabel Twee - Drie</div>

<!-- sheet tabs -->
<div class="a" style="left:1px;top:559px;width:644px;height:22px;background:#f0f0f0"></div>
<div class="a" style="left:1px;top:559px;width:46px;height:22px;background:#fff;border-right:1px solid #d8d8d8"></div>
<div class="t" style="left:8px;top:567px;font-size:11px;color:#1a1a1a;letter-spacing:-0.2px">Blad 1</div>

<!-- status -->
<div class="a" style="left:1px;top:581px;width:644px;height:19px;background:linear-gradient(#eef4fc,#c9daf0);border:1px solid #7d95b6"></div>
<div class="a" style="left:2px;top:582px;width:199px;height:17px;border:1px solid rgba(255,255,255,0.7);border-right:none"></div>
<div class="a" style="left:201px;top:582px;width:1px;height:17px;background:#9eb2cc"></div>
<div class="a" style="left:202px;top:582px;width:1px;height:17px;background:#fff"></div>
<div class="a" style="left:281px;top:582px;width:1px;height:17px;background:#9eb2cc"></div>
<div class="a" style="left:282px;top:582px;width:1px;height:17px;background:#fff"></div>
<div class="a" style="left:401px;top:582px;width:1px;height:17px;background:#9eb2cc"></div>
<div class="a" style="left:402px;top:582px;width:1px;height:17px;background:#fff"></div>
<div class="a" style="left:521px;top:582px;width:1px;height:17px;background:#9eb2cc"></div>
<div class="a" style="left:522px;top:582px;width:1px;height:17px;background:#fff"></div>
<div class="t" style="left:8px;top:584px;font-size:12px;color:#24459a">X: 14703, Y: 14728</div>
<div class="t" style="left:207px;top:584px;font-size:12px;color:#24459a">100 %</div>
<div class="t" style="left:287px;top:584px;font-size:12px;color:#24459a">Gewijzigd</div>
<svg style="left:630px;top:585px" width="12" height="12" viewBox="0 0 12 12" shape-rendering="crispEdges">
 <g fill="#fff"><rect x="10" y="2" width="2" height="2"/><rect x="6" y="6" width="2" height="2"/><rect x="10" y="6" width="2" height="2"/><rect x="2" y="10" width="2" height="2"/><rect x="6" y="10" width="2" height="2"/><rect x="10" y="10" width="2" height="2"/></g>
 <g fill="#6a7f9b"><rect x="9" y="1" width="2" height="2"/><rect x="5" y="5" width="2" height="2"/><rect x="9" y="5" width="2" height="2"/><rect x="1" y="9" width="2" height="2"/><rect x="5" y="9" width="2" height="2"/><rect x="9" y="9" width="2" height="2"/></g>
</svg>

<!-- window border -->
<div class="a" style="left:0;top:0;width:646px;height:601px;border:1px solid #f8aa00;z-index:50"></div>
</body></html>
